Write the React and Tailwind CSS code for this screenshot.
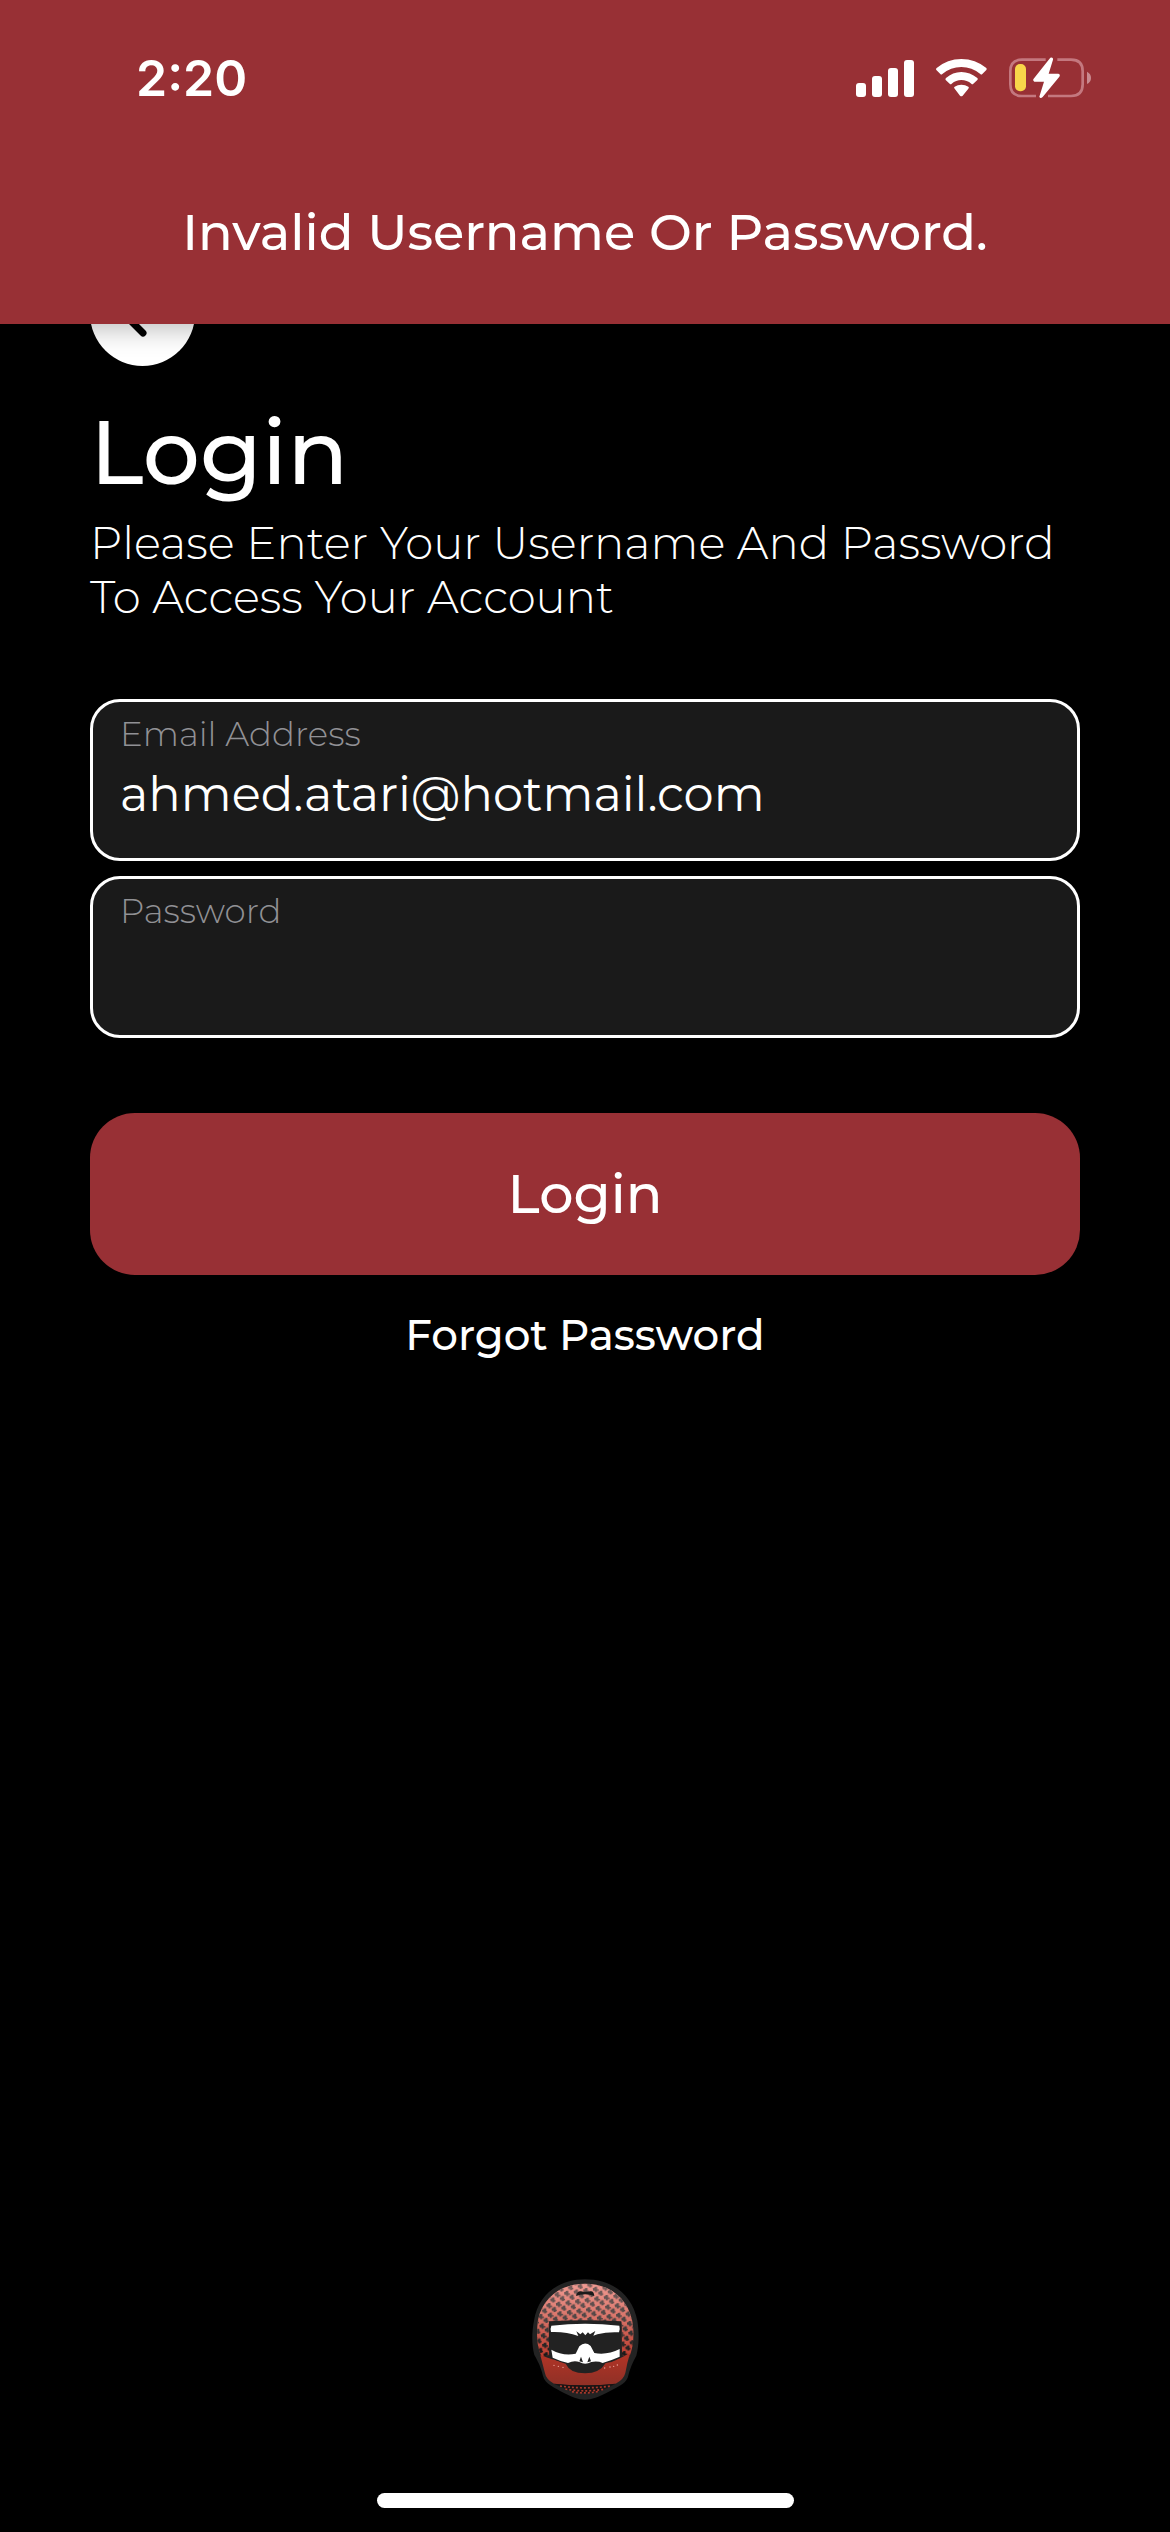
import React from "react";

function SignalIcon() {
  return (
    <svg viewBox="108 87 174 111" className="h-[37px] w-[58px]" fill="#fff" aria-hidden="true">
      <rect x="108" y="156" width="30" height="42" rx="9" />
      <rect x="156" y="135" width="30" height="63" rx="9" />
      <rect x="204" y="111" width="30" height="87" rx="9" />
      <rect x="252" y="87" width="30" height="111" rx="9" />
    </svg>
  );
}

function WifiIcon() {
  return (
    <svg viewBox="348 86 153 114" className="h-[38px] w-[51px]" fill="#fff" aria-hidden="true">
      <path d="M349 119Q347 116 350 113Q382 86 424 86Q466 86 499 113Q501 116 499 119L487 131Q484 134 481 131Q456 110 424 110Q392 110 367 131Q364 134 361 131Z" />
      <path d="M377 149Q375 146 378 143Q398 125 424 125Q450 125 472 143Q475 146 472 149L460 160Q457 163 454 160Q441 149 424 149Q408 149 395 160Q392 163 389 160Z" />
      <path d="M403 174Q401 171 404 169Q413 163 424 163Q436 163 445 169Q448 171 445 175L428 196Q424 200 420 196Z" />
    </svg>
  );
}

function BatteryIcon() {
  return (
    <svg viewBox="567 80 246 126" className="h-[42px] w-[82px]" fill="none" aria-hidden="true">
      <path
        d="M677 88H606Q571 88 571 123V162Q571 197 606 197H648M712 88H753Q788 88 788 123V162Q788 197 753 197H684"
        stroke="#c4787f"
        strokeWidth="8"
      />
      <path d="M801 124Q813 130 813 143Q813 155 801 161Z" fill="#c98a90" />
      <rect x="585" y="101" width="33" height="82" rx="15" fill="#f8d64a" />
      <path
        d="M691 82Q700 79 699 88L686 130H715Q722 132 718 139L668 200Q661 206 658 199L672 154H643Q637 151 641 145Z"
        fill="#fff"
      />
    </svg>
  );
}

function HelmetLogo() {
  return (
    <svg viewBox="64 58 321 363" className="h-[121px] w-[107px]" role="img" aria-label="Helmet logo">
      <defs>
        <linearGradient id="cloth" x1="0" y1="0" x2="0" y2="1">
          <stop offset="0" stopColor="#f09a92" />
          <stop offset="0.45" stopColor="#d9756a" />
          <stop offset="1" stopColor="#b93a2c" />
        </linearGradient>
        <linearGradient id="check" x1="0" y1="0" x2="0" y2="1">
          <stop offset="0" stopColor="#7a5f5d" />
          <stop offset="0.5" stopColor="#4a4242" />
          <stop offset="1" stopColor="#161616" />
        </linearGradient>
        <linearGradient id="chin" x1="0" y1="0" x2="0" y2="1">
          <stop offset="0" stopColor="#b23426" />
          <stop offset="1" stopColor="#8f3026" />
        </linearGradient>
        <pattern id="tooth" width="29" height="29" patternUnits="userSpaceOnUse" patternTransform="rotate(-8)">
          <path d="M0 3H5V0H13V9H17V13H11V16H5V11H0ZM14 17H19V14H27V23H29V27H25V29H19V25H14Z" fill="#fff" />
        </pattern>
        <mask id="weave">
          <rect x="60" y="50" width="330" height="380" fill="url(#tooth)" />
        </mask>
      </defs>
      <path
        d="M223 59C305 59 365 105 380 183C386 218 385 258 377 288C366 307 357 329 351 354C344 374 313 385 287 400C266 411 243 420 223 420C203 420 181 411 160 400C133 385 102 372 97 349C91 323 82 305 71 286C63 257 63 218 70 183C82 106 143 59 223 59Z"
        fill="#232323"
      />
      <path
        d="M223 72C293 72 348 111 364 180C372 220 369 260 356 292L334 286L333 192Q223 180 114 192L116 286L94 292C77 261 77 220 82 180C97 112 153 72 223 72Z"
        fill="url(#cloth)"
      />
      <path
        d="M223 72C293 72 348 111 364 180C372 220 369 260 356 292L334 286L333 192Q223 180 114 192L116 286L94 292C77 261 77 220 82 180C97 112 153 72 223 72Z"
        fill="url(#check)"
        mask="url(#weave)"
      />
      <path d="M196 109Q200 93 211 95Q223 98 239 95Q250 94 251 109Q223 98 196 109Z" fill="#1b1b1b" />
      <path
        d="M89 287L120 297L164 310H281L325 297L358 281Q350 307 344 340Q339 360 315 372Q223 384 130 372Q106 360 102 337Z"
        fill="url(#chin)"
      />
      <path d="M115 185Q223 178 332 185V286Q322 306 285 310Q267 341 223 341Q178 341 165 312Q125 300 116 285Z" fill="#222" />
      <path
        d="M122 198Q223 187 326 198Q329 207 325 218Q290 216 260 224L248 228L254 214L238 224L232 218L224 227L216 218L209 224L197 215L203 229Q165 215 121 217Q118 207 122 198Z"
        fill="#fff"
      />
      <path
        d="M122 270Q157 290 195 282L206 260Q223 244 240 259L251 280Q290 287 327 268V291Q302 302 276 310Q261 303 242 307Q223 317 206 307Q190 301 172 310Q145 303 126 294Z"
        fill="#fff"
      />
      <path d="M206 305L211 291L217 308ZM241 305L236 291L230 308Z" fill="#222" />
      <g fill="#efaaa2">
        <circle cx="130" cy="317" r="2" />
        <circle cx="143" cy="320" r="2" />
        <circle cx="157" cy="323" r="2" />
        <circle cx="282" cy="325" r="2" />
        <circle cx="298" cy="322" r="2" />
        <circle cx="309" cy="320" r="2" />
        <circle cx="320" cy="316" r="2" />
      </g>
      <path d="M130 372Q223 382 315 372L276 392Q223 410 171 391Z" fill="#191414" />
      <path d="M148 379Q223 390 300 379M164 388Q223 399 283 388M184 396Q223 404 264 395" stroke="#a5382b" strokeWidth="5" strokeDasharray="6 6" fill="none" />
    </svg>
  );
}

function Field({ id, label, type, defaultValue }) {
  return (
    <div className="flex h-[162px] flex-col rounded-[30px] border-[3px] border-white bg-[#1a1a1a] px-[27px] pt-[10px]">
      <label htmlFor={id} className="text-[34px] leading-[44px] font-light text-[#919195]">
        {label}
      </label>
      <input
        id={id}
        type={type}
        defaultValue={defaultValue}
        className="h-[76px] w-full bg-transparent text-[48px] text-white outline-none"
      />
    </div>
  );
}

export default function App() {
  return (
    <div className="relative flex min-h-screen flex-col bg-black font-['Montserrat','Inter',sans-serif] text-white antialiased">
      <header className="absolute inset-x-0 top-0 z-10 h-[324px] bg-[#983035] shadow-[0_6px_24px_rgba(0,0,0,0.25)]">
        <div className="flex h-[156px] items-center justify-between pr-[79px] pl-[136px]">
          <time className="font-['Inter'] text-[50px] font-semibold">2:20</time>
          <div className="flex items-center gap-[22px]">
            <SignalIcon />
            <WifiIcon />
            <BatteryIcon />
          </div>
        </div>
        <p role="alert" className="mt-11 text-center text-[51px] leading-[64px] font-medium">
          Invalid Username Or Password.
        </p>
      </header>

      <main className="flex flex-1 flex-col px-[90px] pt-[261px]">
        <button
          type="button"
          aria-label="Back"
          className="flex size-[105px] items-center justify-center rounded-full bg-white text-black"
        >
          <svg viewBox="0 0 48 48" className="size-12" fill="none" stroke="currentColor" strokeWidth="7" strokeLinecap="round" strokeLinejoin="round" aria-hidden="true">
            <path d="M24 5L5 24L24 43" />
          </svg>
        </button>
        <h1 className="mt-[30px] text-[90px] leading-[112px] font-medium">Login</h1>
        <p className="mt-2 text-[45px] leading-[54px] font-light">
          Please Enter Your Username And Password To Access Your Account
        </p>
        <form className="mt-[75px] flex flex-col" onSubmit={(e) => e.preventDefault()}>
          <div className="flex flex-col gap-[15px]">
            <Field id="email" label="Email Address" type="email" defaultValue="ahmed.atari@hotmail.com" />
            <Field id="password" label="Password" type="password" />
          </div>
          <button type="submit" className="mt-[75px] h-[162px] rounded-[45px] bg-[#983035] text-[54px] font-medium">
            Login
          </button>
        </form>
        <a href="#forgot" className="mt-8 self-center text-[42px] leading-[56px] font-medium">
          Forgot Password
        </a>
      </main>

      <footer className="flex flex-col items-center pb-6">
        <HelmetLogo />
        <div className="mt-[93px] h-[15px] w-[417px] rounded-full bg-white" />
      </footer>
    </div>
  );
}
